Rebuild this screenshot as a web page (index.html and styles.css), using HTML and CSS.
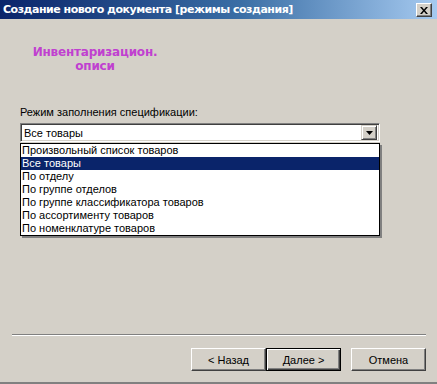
FILE: index.html
```html
<!DOCTYPE html>
<html lang="ru">
<head>
    <meta charset="UTF-8">
    <title>Создание нового документа</title>
    <link rel="stylesheet" href="styles.css">
</head>
<body>
    <div class="window">
        <div class="titlebar">
            <span class="title">Создание нового документа [режимы создания]</span>
            <span class="close-btn">
                <svg width="8" height="7" viewBox="0 0 8 7">
                    <path d="M0 0h2l2 2.5L6 0h2L5 3.5 8 7H6L4 4.5 2 7H0l3-3.5z" fill="#000"/>
                </svg>
            </span>
        </div>
        <div class="content">
            <div class="heading">Инвентаризацион.<br>описи</div>

            <div class="field">
                <label class="field-label">Режим заполнения спецификации:</label>
                <div class="combo">
                    <span class="combo-value">Все товары</span>
                    <span class="combo-btn">
                        <svg width="7" height="4" viewBox="0 0 7 4"><path d="M0 0h7L3.5 4z" fill="#000"/></svg>
                    </span>
                    <ul class="dropdown">
                        <li>Произвольный список товаров</li>
                        <li class="selected">Все товары</li>
                        <li>По отделу</li>
                        <li>По группе отделов</li>
                        <li>По группе классификатора товаров</li>
                        <li>По ассортименту товаров</li>
                        <li>По номенклатуре товаров</li>
                    </ul>
                </div>
            </div>

            <div class="footer">
                <div class="separator"></div>
                <div class="buttons">
                    <button class="btn">&lt; Назад</button>
                    <button class="btn default">Далее &gt;</button>
                    <button class="btn cancel">Отмена</button>
                </div>
            </div>
        </div>
    </div>
</body>
</html>
```

FILE: styles.css
```css
html, body {
    margin: 0;
    padding: 0;
}
body {
    width: 437px;
    height: 384px;
    overflow: hidden;
    font-family: "Liberation Sans", Arial, sans-serif;
    font-size: 11px;
    color: #000;
}
.window {
    width: 437px;
    height: 384px;
    box-sizing: border-box;
    background: #d4d0c8;
    border-bottom: 2px solid #808080;
    display: flex;
    flex-direction: column;
}
.titlebar {
    height: 19px;
    background: linear-gradient(to right, #0a246a 0%, #3a6ea5 55%, #a6caf0 100%);
    display: flex;
    align-items: center;
    justify-content: space-between;
    padding: 0 5px 0 3px;
}
.title {
    color: #fff;
    font-family: "DejaVu Sans", sans-serif;
    font-weight: bold;
    font-size: 11px;
    letter-spacing: -0.48px;
}
.close-btn {
    width: 16px;
    height: 14px;
    box-sizing: border-box;
    background: #d4d0c8;
    border-top: 1px solid #fff;
    border-left: 1px solid #fff;
    border-right: 1px solid #404040;
    border-bottom: 1px solid #404040;
    box-shadow: inset -1px -1px 0 #808080;
    display: flex;
    align-items: center;
    justify-content: center;
    margin-top: 1px;
}
.content {
    flex: 1;
    display: flex;
    flex-direction: column;
}
.heading {
    width: 190px;
    margin-top: 26px;
    text-align: center;
    color: #c040d0;
    font-family: "DejaVu Sans", sans-serif;
    font-weight: bold;
    font-size: 12px;
    line-height: 14px;
    letter-spacing: -0.2px;
}
.field {
    margin: 33px 0 0 20px;
}
.field-label {
    display: block;
    line-height: 13px;
    margin-bottom: 4px;
}
.combo {
    position: relative;
    width: 360px;
    height: 19px;
    box-sizing: border-box;
    background: #fff;
    border-top: 1px solid #808080;
    border-left: 1px solid #808080;
    border-right: 1px solid #fff;
    border-bottom: 1px solid #fff;
    box-shadow: inset 1px 1px 0 #404040, inset -1px -1px 0 #d4d0c8;
    display: flex;
    align-items: center;
    justify-content: space-between;
    padding: 0 2px 0 3px;
}
.combo-btn {
    width: 16px;
    height: 15px;
    box-sizing: border-box;
    background: #d4d0c8;
    border-top: 1px solid #d4d0c8;
    border-left: 1px solid #d4d0c8;
    border-right: 1px solid #404040;
    border-bottom: 1px solid #404040;
    box-shadow: inset 1px 1px 0 #fff, inset -1px -1px 0 #808080;
    display: flex;
    align-items: center;
    justify-content: center;
}
.dropdown {
    position: absolute;
    top: 19px;
    left: -1px;
    width: 360px;
    box-sizing: border-box;
    margin: 0;
    padding: 0;
    list-style: none;
    background: #fff;
    border: 1px solid #000;
    box-shadow: 2px 2px 0 #808080;
    z-index: 2;
}
.dropdown li {
    height: 13px;
    line-height: 13px;
    padding-left: 1px;
    white-space: nowrap;
}
.dropdown li.selected {
    background: #0a246a;
    color: #fff;
}
.footer {
    margin-top: auto;
    padding: 0 11px 11px 12px;
}
.separator {
    height: 0;
    border-top: 1px solid #808080;
    border-bottom: 1px solid #fff;
    margin-bottom: 12px;
}
.buttons {
    display: flex;
    justify-content: flex-end;
}
.btn {
    width: 75px;
    height: 23px;
    box-sizing: border-box;
    font-family: "Liberation Sans", Arial, sans-serif;
    font-size: 11px;
    color: #000;
    background: #d4d0c8;
    border-top: 1px solid #fff;
    border-left: 1px solid #fff;
    border-right: 1px solid #404040;
    border-bottom: 1px solid #404040;
    box-shadow: inset -1px -1px 0 #808080;
    padding: 0;
}
.btn.default {
    border: 1px solid #000;
    box-shadow: inset 1px 1px 0 #fff, inset -1px -1px 0 #404040, inset -2px -2px 0 #808080;
}
.btn.cancel {
    margin-left: 10px;
}
```
